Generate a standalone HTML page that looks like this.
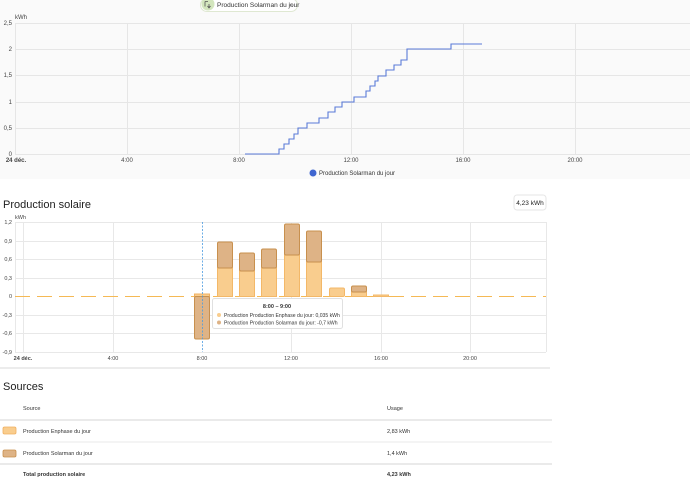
<!DOCTYPE html>
<html><head><meta charset="utf-8"><style>
body{margin:0;width:690px;height:482px;overflow:hidden;background:#fff;font-family:"Liberation Sans",sans-serif;position:relative}
.top{position:absolute;left:0;top:0;width:690px;height:179px;background:#fafafa}
</style></head><body>
<div class="top"></div>
<svg width="690" height="482" style="position:absolute;left:0;top:0" font-family="Liberation Sans, sans-serif">
<rect x="200.5" y="-1.5" width="97" height="13" rx="6.5" fill="#fff" stroke="#dfe8d2"/>
<circle cx="208" cy="4" r="6.5" fill="#d3e6bd"/>
<path d="M205 1.5 v5 M205 1.5 h3 M209 4 v4 M207.5 6 l1.5 2 l1.5 -2" stroke="#555" stroke-width="0.8" fill="none"/>
<text x="217" y="7" font-size="6.5" fill="#333">Production Solarman du jour</text>
<text x="289" y="7" font-size="6.5" fill="#777">×</text>
<g stroke="#e6e6e6" stroke-width="1">
<line x1="15" y1="23.5" x2="690" y2="23.5"/><line x1="15" y1="49.5" x2="690" y2="49.5"/><line x1="15" y1="75.5" x2="690" y2="75.5"/><line x1="15" y1="102.5" x2="690" y2="102.5"/><line x1="15" y1="128.5" x2="690" y2="128.5"/><line x1="15" y1="154.5" x2="690" y2="154.5"/>
<line x1="15.5" y1="23" x2="15.5" y2="154"/><line x1="127.5" y1="23" x2="127.5" y2="154"/><line x1="239.5" y1="23" x2="239.5" y2="154"/><line x1="351.5" y1="23" x2="351.5" y2="154"/><line x1="463.5" y1="23" x2="463.5" y2="154"/><line x1="575.5" y1="23" x2="575.5" y2="154"/>
</g>
<g font-size="6" fill="#444" text-anchor="end">
<text x="12" y="25">2,5</text><text x="12" y="51">2</text><text x="12" y="77">1,5</text><text x="12" y="104">1</text><text x="12" y="130">0,5</text><text x="12" y="156">0</text>
</g>
<text x="15" y="19" font-size="6" fill="#444">kWh</text>
<g font-size="6" fill="#444" text-anchor="middle">
<text x="16" y="162" font-weight="bold">24 déc.</text><text x="127" y="162">4:00</text><text x="239" y="162">8:00</text><text x="351" y="162">12:00</text><text x="463" y="162">16:00</text><text x="575" y="162">20:00</text>
</g>
<polyline fill="none" stroke="#5a7bd8" stroke-width="1.1" points="245,154 279,154 279,149 284,149 284,144 289,144 289,139 294,139 294,134 298,134 298,128 307,128 307,123 319,123 319,118 328,118 328,112 335,112 335,107 342,107 342,102 354,102 354,97 366,97 366,91 370,91 370,86 375,86 375,81 378,81 378,76 386,76 386,70 394,70 394,65 401,65 401,60 407,60 407,55 407,49 451,49 451,44 482,44"/>
<circle cx="313" cy="173" r="3.5" fill="#3f66d0"/>
<text x="319" y="175" font-size="6" fill="#333">Production Solarman du jour</text>

<text x="3" y="208" font-size="11" fill="#212121">Production solaire</text>
<rect x="514" y="195" width="32" height="15" rx="3" fill="#fff" stroke="#e6e6e6"/>
<text x="530" y="205" font-size="6.5" fill="#222" text-anchor="middle">4,23 kWh</text>
<line x1="0" y1="368" x2="550" y2="368" stroke="#ececec" stroke-width="2"/>
<g stroke="#e8e8e8">
<line x1="15" y1="222.5" x2="546" y2="222.5"/><line x1="15" y1="241.5" x2="546" y2="241.5"/><line x1="15" y1="259.5" x2="546" y2="259.5"/><line x1="15" y1="278.5" x2="546" y2="278.5"/><line x1="15" y1="315.5" x2="546" y2="315.5"/><line x1="15" y1="333.5" x2="546" y2="333.5"/><line x1="15" y1="352.5" x2="546" y2="352.5"/>
<line x1="15.5" y1="222" x2="15.5" y2="352"/><line x1="23.5" y1="222" x2="23.5" y2="352"/><line x1="113.5" y1="222" x2="113.5" y2="352"/><line x1="291.5" y1="222" x2="291.5" y2="352"/><line x1="381.5" y1="222" x2="381.5" y2="352"/><line x1="470.5" y1="222" x2="470.5" y2="352"/><line x1="546.5" y1="222" x2="546.5" y2="352"/>
</g>
<text x="15" y="219" font-size="5.5" fill="#444">kWh</text>
<g font-size="5.5" fill="#444" text-anchor="end">
<text x="12" y="224">1,2</text><text x="12" y="243">0,9</text><text x="12" y="261">0,6</text><text x="12" y="280">0,3</text><text x="12" y="298">0</text><text x="12" y="317">-0,3</text><text x="12" y="335">-0,6</text><text x="12" y="354">-0,9</text>
</g>
<g font-size="5.5" fill="#444" text-anchor="middle">
<text x="23" y="360" font-weight="bold">24 déc.</text><text x="113" y="360">4:00</text><text x="202" y="360">8:00</text><text x="291" y="360">12:00</text><text x="381" y="360">16:00</text><text x="470" y="360">20:00</text>
</g>
<line x1="15" y1="296.5" x2="546" y2="296.5" stroke="#f5b955" stroke-width="1" stroke-dasharray="15,7"/>
<g stroke-width="1">
<rect x="194.5" y="294" width="15" height="2.5" fill="#f9cd8e" stroke="#f0b060"/>
<rect x="194.5" y="296.5" width="15" height="42.5" rx="1.5" fill="#deb386" stroke="#c8904e"/>
<rect x="217.5" y="268" width="15" height="28.5" fill="#f9cd8e" stroke="#f3b868"/>
<rect x="217.5" y="242" width="15" height="26" rx="1.5" fill="#deb386" stroke="#c8904e"/>
<rect x="239.5" y="271" width="15" height="25.5" fill="#f9cd8e" stroke="#f3b868"/>
<rect x="239.5" y="253" width="15" height="18" rx="1.5" fill="#deb386" stroke="#c8904e"/>
<rect x="261.5" y="268" width="15" height="28.5" fill="#f9cd8e" stroke="#f3b868"/>
<rect x="261.5" y="249" width="15" height="19" rx="1.5" fill="#deb386" stroke="#c8904e"/>
<rect x="284.5" y="255" width="15" height="41.5" fill="#f9cd8e" stroke="#f3b868"/>
<rect x="284.5" y="224" width="15" height="31" rx="1.5" fill="#deb386" stroke="#c8904e"/>
<rect x="306.5" y="262" width="15" height="34.5" fill="#f9cd8e" stroke="#f3b868"/>
<rect x="306.5" y="231" width="15" height="31" rx="1.5" fill="#deb386" stroke="#c8904e"/>
<rect x="329.5" y="288" width="15" height="8.5" rx="1.5" fill="#f9cd8e" stroke="#f3b868"/>
<rect x="351.5" y="292" width="15" height="4.5" fill="#f9cd8e" stroke="#f3b868"/>
<rect x="351.5" y="286" width="15" height="6" rx="1.5" fill="#deb386" stroke="#c8904e"/>
<rect x="373.5" y="295" width="15" height="1.5" fill="#f9cd8e" stroke="#f3b868"/>
</g>
<line x1="202.5" y1="222" x2="202.5" y2="352" stroke="#4a9be0" stroke-width="0.8" stroke-dasharray="2,1.5"/>
<rect x="212.5" y="298.5" width="130" height="30" rx="2" fill="#fff" stroke="#e0e0e0"/>
<text x="277" y="308" font-size="5.5" font-weight="bold" fill="#333" text-anchor="middle">8:00 – 9:00</text>
<circle cx="219" cy="315" r="2" fill="#f9cd8e"/><text x="224" y="317" font-size="5.1" fill="#333">Production Production Enphase du jour: 0,035 kWh</text>
<circle cx="219" cy="322.5" r="2" fill="#deb386"/><text x="224" y="324.5" font-size="5.1" fill="#333">Production Production Solarman du jour: -0,7 kWh</text>

<text x="3" y="390" font-size="11" fill="#212121">Sources</text>
<text x="23" y="410" font-size="5.5" fill="#333">Source</text>
<text x="387" y="410" font-size="5.5" fill="#333">Usage</text>
<line x1="0" y1="420" x2="552" y2="420" stroke="#e4e4e4" stroke-width="1.5"/>
<rect x="3" y="427" width="13" height="7" rx="1.5" fill="#f9cd8e" stroke="#f0b060" stroke-width="0.8"/>
<text x="23" y="433" font-size="5.5" fill="#333">Production Enphase du jour</text>
<text x="387" y="433" font-size="5.5" fill="#333">2,83 kWh</text>
<line x1="0" y1="442" x2="552" y2="442" stroke="#eaeaea"/>
<rect x="3" y="450" width="13" height="7" rx="1.5" fill="#deb386" stroke="#c8904e" stroke-width="0.8"/>
<text x="23" y="455" font-size="5.5" fill="#333">Production Solarman du jour</text>
<text x="387" y="455" font-size="5.5" fill="#333">1,4 kWh</text>
<line x1="0" y1="464" x2="552" y2="464" stroke="#e4e4e4" stroke-width="1.5"/>
<text x="23" y="476" font-size="5.5" font-weight="bold" fill="#333">Total production solaire</text>
<text x="387" y="476" font-size="5.5" font-weight="bold" fill="#333">4,23 kWh</text>
</svg>
</body></html>
